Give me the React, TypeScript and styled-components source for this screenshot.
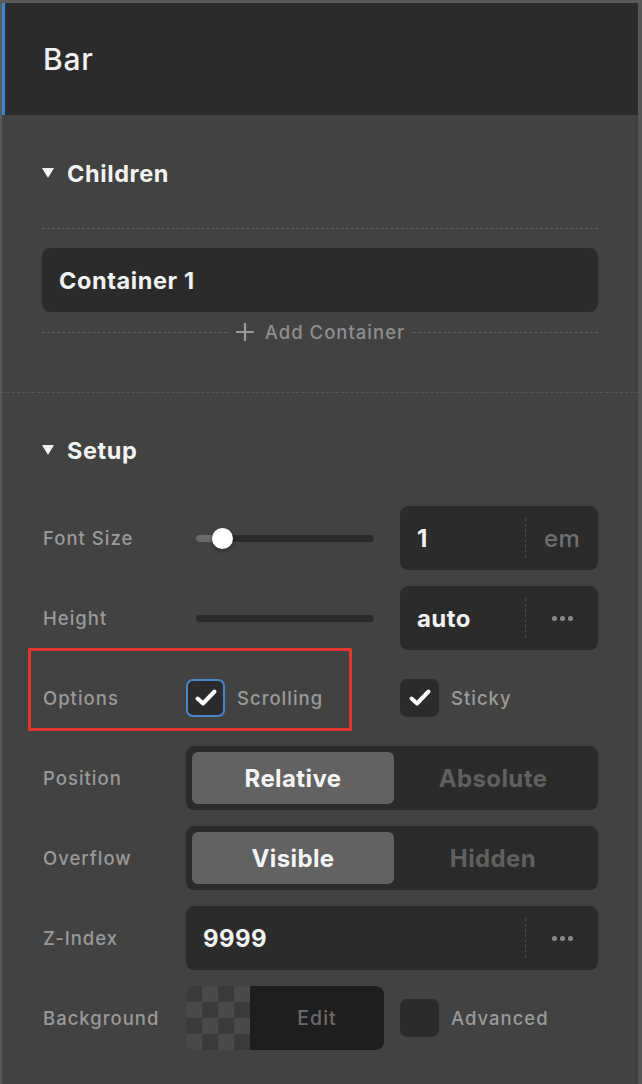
import React from "react";
import styled, { createGlobalStyle } from "styled-components";

const Global = createGlobalStyle`
  html, body {
    margin: 0;
    padding: 0;
    background: #424242;
  }
  * { box-sizing: border-box; }
`;

const Panel = styled.div`
  width: 642px;
  height: 1084px;
  background: #424242;
  border-top: 3px solid #5a5a5a;
  border-left: 2px solid #5a5a5a;
  border-right: 4px solid #555;
  font-family: Inter, "Noto Sans", sans-serif;
  overflow: hidden;
`;

const Header = styled.div`
  height: 112px;
  background: #2b2b2b;
  border-left: 3px solid #3d82d6;
  display: flex;
  align-items: center;
  padding-left: 38px;
  color: #f2f2f2;
  font-size: 30px;
  font-weight: 500;
  letter-spacing: 0.8px;
`;

const Section = styled.div<{ $divider?: boolean }>`
  padding: ${(p) => (p.$divider ? "44px" : "43px")} 40px 48px 40px;
  border-bottom: ${(p) => (p.$divider ? "1px dashed #575757" : "none")};
`;

const SectionTitle = styled.div`
  height: 28px;
  display: flex;
  align-items: center;
  gap: 13px;
  color: #f2f2f2;
  font-size: 23.5px;
  font-weight: 700;
  letter-spacing: 0.6px;
`;

const Triangle = styled.span`
  width: 0;
  height: 0;
  border-left: 6.5px solid transparent;
  border-right: 6.5px solid transparent;
  border-top: 10px solid #f2f2f2;
`;

const DashedLine = styled.div`
  border-top: 1px dashed #5e5e5e;
  margin-top: 41px;
`;

const ChildItem = styled.div`
  margin-top: 19px;
  height: 64px;
  border-radius: 8px;
  background: #2b2b2b;
  display: flex;
  align-items: center;
  padding-left: 17px;
  color: #f2f2f2;
  font-size: 23.5px;
  font-weight: 700;
  letter-spacing: 0.6px;
`;

const AddRow = styled.div`
  margin-top: 8px;
  height: 24px;
  display: flex;
  align-items: center;
  gap: 8px;
  &::before, &::after {
    content: "";
    flex: 1;
    border-top: 1px dashed #5e5e5e;
  }
`;

const AddLabel = styled.span`
  display: flex;
  align-items: center;
  gap: 10px;
  color: #8e8e8e;
  font-size: 18.5px;
  font-weight: 500;
  letter-spacing: 1px;
`;

const Rows = styled.div`
  margin-top: 42px;
  display: flex;
  flex-direction: column;
  gap: 16px;
`;

const Row = styled.div`
  position: relative;
  height: 64px;
  display: grid;
  grid-template-columns: 144px 1fr;
  align-items: center;
`;

const Label = styled.span`
  padding-left: 1px;
  color: #9a9a9a;
  font-size: 18.5px;
  font-weight: 500;
  letter-spacing: 1px;
`;

const Split = styled.div`
  height: 100%;
  display: grid;
  grid-template-columns: 198px 198px;
  gap: 16px;
  align-items: center;
`;

const SliderArea = styled.div`
  position: relative;
  height: 100%;
  display: flex;
  align-items: center;
  padding: 0 10px;
`;

const Track = styled.div`
  position: relative;
  flex: 1;
  height: 7px;
  border-radius: 4px;
  background: #2a2a2a;
`;

const TrackFill = styled.div`
  position: absolute;
  left: 0;
  top: 0;
  bottom: 0;
  border-radius: 4px 0 0 4px;
  background: #6b6b6b;
`;

const Thumb = styled.div`
  position: absolute;
  top: 50%;
  width: 21px;
  height: 21px;
  margin: -10.5px 0 0 -10.5px;
  border-radius: 50%;
  background: #fff;
  box-shadow: 0 2px 4px rgba(0, 0, 0, 0.35);
`;

const InputBox = styled.div`
  height: 64px;
  border-radius: 8px;
  background: #2b2b2b;
  display: flex;
  align-items: center;
`;

const Value = styled.span`
  flex: 1;
  padding-left: 17px;
  color: #f2f2f2;
  font-size: 24px;
  font-weight: 700;
  letter-spacing: 0.4px;
`;

const VDivider = styled.span`
  align-self: center;
  height: 40px;
  border-left: 1px dashed #4d4d4d;
`;

const Suffix = styled.span`
  width: 72px;
  display: flex;
  justify-content: center;
  align-items: center;
  color: #6f6f6f;
  font-size: 24px;
  font-weight: 500;
  letter-spacing: 0.3px;
`;

const Dots = styled.span`
  display: flex;
  gap: 3px;
  & > i {
    width: 5px;
    height: 5px;
    border-radius: 50%;
    background: #8a8a8a;
  }
`;

const CheckWrap = styled.label`
  display: flex;
  align-items: center;
  gap: 12px;
  color: #9a9a9a;
  font-size: 18.5px;
  font-weight: 500;
  letter-spacing: 1px;
`;

const Box = styled.span<{ $focus?: boolean }>`
  width: 39px;
  height: 38px;
  border-radius: 7px;
  background: #2b2b2b;
  border: 2px solid ${(p) => (p.$focus ? "#4a85cc" : "#2b2b2b")};
  display: flex;
  align-items: center;
  justify-content: center;
`;

const Highlight = styled.div`
  position: absolute;
  left: -14px;
  top: -18px;
  width: 324px;
  height: 83px;
  border: 3px solid #e0382c;
  pointer-events: none;
`;

const Segmented = styled.div`
  height: 64px;
  border-radius: 8px;
  background: #2b2b2b;
  padding: 6px;
  display: grid;
  grid-template-columns: 202px 1fr;
`;

const Segment = styled.div<{ $active?: boolean }>`
  display: flex;
  align-items: center;
  justify-content: center;
  border-radius: 6px;
  background: ${(p) => (p.$active ? "#626262" : "transparent")};
  color: ${(p) => (p.$active ? "#f4f4f4" : "#606060")};
  font-size: 24px;
  font-weight: 700;
  letter-spacing: 0.4px;
`;

const BgPicker = styled.div`
  height: 64px;
  display: flex;
  border-radius: 8px;
  overflow: hidden;
`;

const Checker = styled.div`
  width: 64px;
  background-color: #3a3a3a;
  background-image:
    linear-gradient(45deg, #494949 25%, transparent 25%, transparent 75%, #494949 75%),
    linear-gradient(45deg, #494949 25%, transparent 25%, transparent 75%, #494949 75%);
  background-size: 32px 32px;
  background-position: 0 0, 16px 16px;
`;

const EditButton = styled.div`
  flex: 1;
  background: #1e1e1e;
  border-radius: 0 8px 8px 0;
  display: flex;
  align-items: center;
  justify-content: center;
  color: #6a6a6a;
  font-size: 19.5px;
  font-weight: 500;
  letter-spacing: 1px;
`;

const Check = () => (
  <svg width="24" height="20" viewBox="0 0 24 20">
    <path d="M3.5 10.5 L9 15.5 L20.5 3.5" fill="none" stroke="#fff" strokeWidth="4" strokeLinecap="round" strokeLinejoin="round" />
  </svg>
);

const Plus = () => (
  <svg width="20" height="20" viewBox="0 0 20 20">
    <path d="M10 1 V19 M1 10 H19" stroke="#9a9a9a" strokeWidth="2.2" />
  </svg>
);

const Checkbox = ({ label, checked, focus }: { label: string; checked?: boolean; focus?: boolean }) => (
  <CheckWrap>
    <Box $focus={focus}>{checked && <Check />}</Box>
    {label}
  </CheckWrap>
);

const Field = ({ value, unit }: { value: string; unit?: string }) => (
  <InputBox>
    <Value>{value}</Value>
    <VDivider />
    <Suffix>{unit ? unit : <Dots><i /><i /><i /></Dots>}</Suffix>
  </InputBox>
);

const Slider = ({ pos }: { pos?: number }) => (
  <SliderArea>
    <Track>
      {pos !== undefined && (
        <>
          <TrackFill style={{ width: `${pos}px` }} />
          <Thumb style={{ left: `${pos}px` }} />
        </>
      )}
    </Track>
  </SliderArea>
);

export default function App() {
  return (
    <>
      <Global />
      <Panel>
        <Header>Bar</Header>

        <Section $divider>
          <SectionTitle>
            <Triangle />
            Children
          </SectionTitle>
          <DashedLine />
          <ChildItem>Container 1</ChildItem>
          <AddRow>
            <AddLabel>
              <Plus />
              Add Container
            </AddLabel>
          </AddRow>
        </Section>

        <Section>
          <SectionTitle>
            <Triangle />
            Setup
          </SectionTitle>
          <Rows>
            <Row>
              <Label>Font Size</Label>
              <Split>
                <Slider pos={26} />
                <Field value="1" unit="em" />
              </Split>
            </Row>
            <Row>
              <Label>Height</Label>
              <Split>
                <Slider />
                <Field value="auto" />
              </Split>
            </Row>
            <Row>
              <Highlight />
              <Label>Options</Label>
              <Split>
                <Checkbox label="Scrolling" checked focus />
                <Checkbox label="Sticky" checked />
              </Split>
            </Row>
            <Row>
              <Label>Position</Label>
              <Segmented>
                <Segment $active>Relative</Segment>
                <Segment>Absolute</Segment>
              </Segmented>
            </Row>
            <Row>
              <Label>Overflow</Label>
              <Segmented>
                <Segment $active>Visible</Segment>
                <Segment>Hidden</Segment>
              </Segmented>
            </Row>
            <Row>
              <Label>Z-Index</Label>
              <Field value="9999" />
            </Row>
            <Row>
              <Label>Background</Label>
              <Split>
                <BgPicker>
                  <Checker />
                  <EditButton>Edit</EditButton>
                </BgPicker>
                <Checkbox label="Advanced" />
              </Split>
            </Row>
          </Rows>
        </Section>
      </Panel>
    </>
  );
}
